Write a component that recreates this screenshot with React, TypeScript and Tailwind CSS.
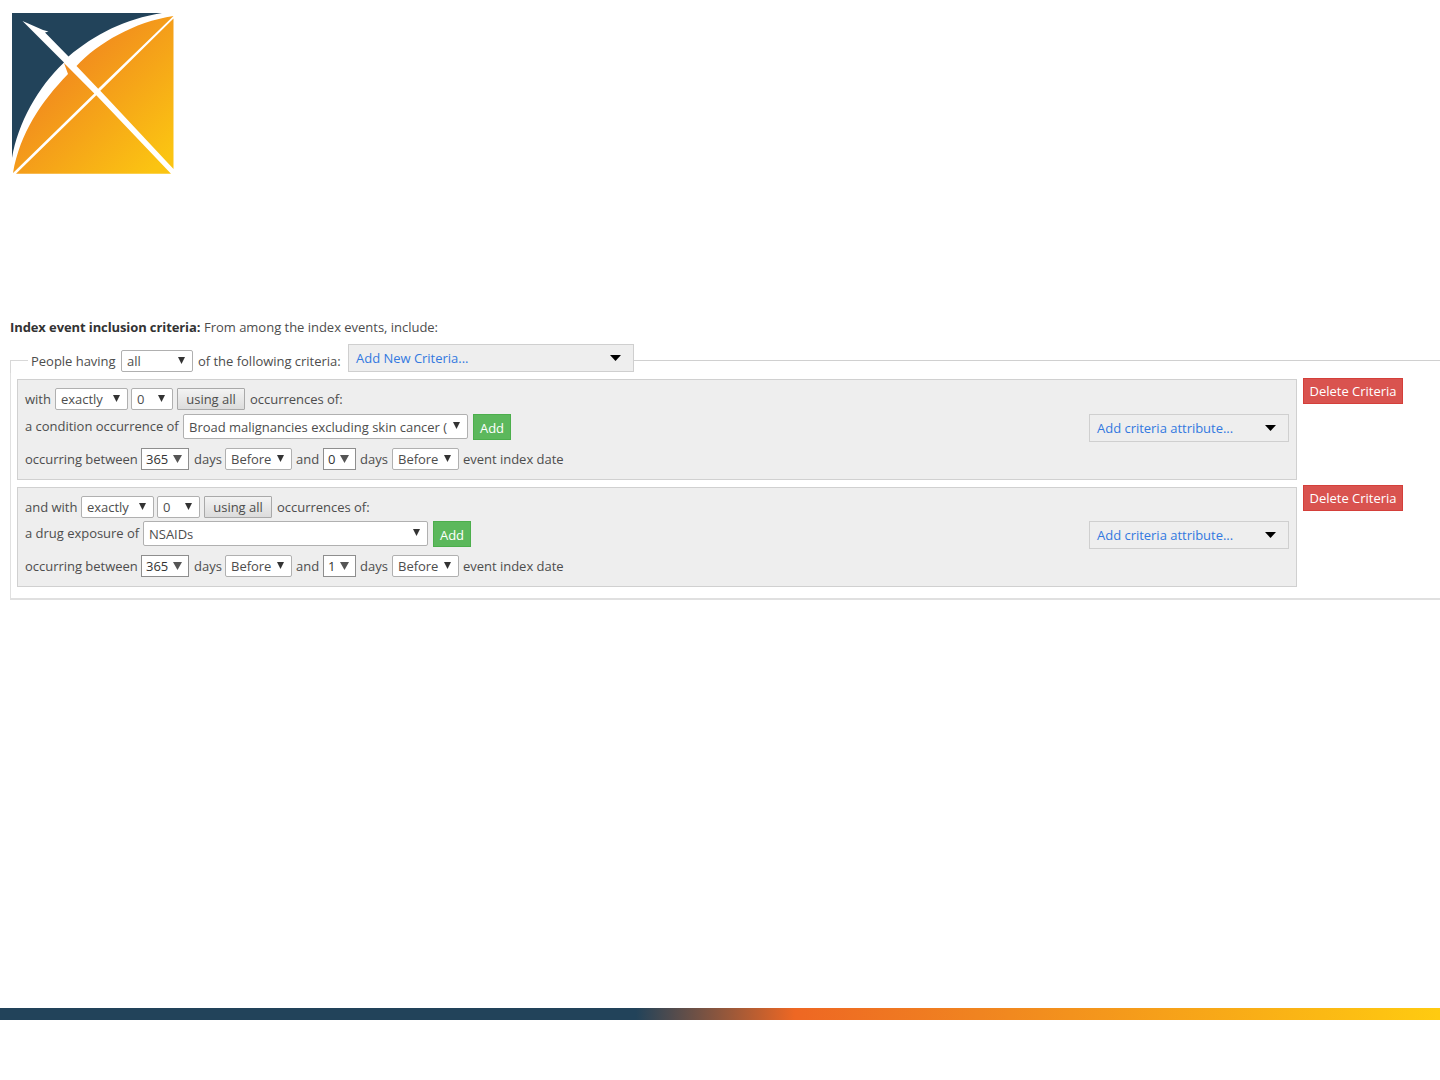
import React from "react";

function Logo() {
  return (
    <svg className="block h-[190px] w-[190px]" viewBox="0 0 190 190">
      <defs>
        <linearGradient id="bow" gradientUnits="userSpaceOnUse" x1="62" y1="62" x2="162" y2="162">
          <stop offset="0" stopColor="#f18a1e" />
          <stop offset="1" stopColor="#fbc412" />
        </linearGradient>
      </defs>
      <path d="M12 13H162C125 19 95 34 68.500 56.500L45 32.500L48.500 31.500L43 30L22.500 21L64 62.500C38 87 18 123 12 158Z" fill="#22435a" />
      <path d="M173.500 16C134 22 98 43 76.500 66L98.200 88.800ZM173.500 18.500L100.300 90.800L173.500 169ZM64 63L94.300 93.400L13 173C20 133 41 102 68 74ZM96.300 95.300L16 173.800H171Z" fill="url(#bow)" />
    </svg>
  );
}

function Text({ w, children }: { w: string; children: React.ReactNode }) {
  return <span className={`${w} shrink-0 whitespace-nowrap`}>{children}</span>;
}

function Arrow({ wide = false }: { wide?: boolean }) {
  return wide ? (
    <svg className="h-[6px] w-[11px] shrink-0" viewBox="0 0 11 6"><path d="M0 0H11L5.500 6Z" fill="#000" /></svg>
  ) : (
    <svg className="h-[7px] w-[7px] shrink-0" viewBox="0 0 7 7"><path d="M0 0H7L3.500 7Z" fill="#333" /></svg>
  );
}

function Select({ w, children, tall = false }: { w: string; children: React.ReactNode; tall?: boolean }) {
  return (
    <div className={`${w} ${tall ? "mb-px h-[25px]" : "h-[22px]"} flex shrink-0 items-center justify-between rounded-[2px] border border-[#b0b0b0] bg-white pr-[7px] pl-[5px] whitespace-nowrap`}>
      <span>{children}</span>
      <span className="pb-[2px]"><Arrow /></span>
    </div>
  );
}

function NumberBox({ w, children }: { w: string; children: React.ReactNode }) {
  return (
    <div className={`${w} flex h-[22px] shrink-0 items-center justify-between border border-[#8e8e8e] bg-white pr-[6px] pl-1 whitespace-nowrap text-[#333]`}>
      <span>{children}</span>
      <svg className="h-[8px] w-[9px]" viewBox="0 0 9 8"><path d="M0 0H9L4.500 8Z" fill="#555" /></svg>
    </div>
  );
}

function UsingAll({ w }: { w: string }) {
  return (
    <div className={`${w} flex h-[22px] shrink-0 items-center justify-center rounded-[1px] border border-[#a9a9a9] bg-linear-to-b from-[#f3f3f3] to-[#dcdcdc] whitespace-nowrap`}>
      using all
    </div>
  );
}

function AddButton() {
  return <div className="ml-[5px] flex h-[26px] w-[38px] shrink-0 items-center justify-center border border-[#4cae4c] bg-[#5cb85c] pt-px font-medium text-white">Add</div>;
}

function DropMenu({ w, children }: { w: string; children: React.ReactNode }) {
  return (
    <div className={`${w} flex h-[28px] shrink-0 items-center justify-between border border-[#cfcfcf] bg-[#eee] pr-3 pl-[7px] whitespace-nowrap text-[#3379e0]`}>
      <span>{children}</span>
      <Arrow wide />
    </div>
  );
}

function Criteria({ first, second, third, compact = false }: { first: React.ReactNode; second: React.ReactNode; third: string; compact?: boolean }) {
  return (
    <div className={`flex ${compact ? "h-[100px]" : "h-[108px]"} items-start`}>
      <div className={`flex ${compact ? "h-[100px]" : "h-[101px]"} w-[1280px] shrink-0 items-start justify-between border border-[#d0d0d0] bg-[#eee] pr-[7px] pl-[7px]`}>
        <div className="flex flex-col pt-2">
          <div className="flex h-[22px] items-center">{first}</div>
          <div className={`${compact ? "mt-[3px]" : "mt-1"} flex h-[26px] items-center`}>{second}</div>
          <div className="mt-2 flex h-[22px] items-center">
            <Text w="w-[116px]">occurring between</Text>
            <NumberBox w="w-[48px]">365</NumberBox>
            <Text w="ml-[5px] w-[31px]">days</Text>
            <Select w="w-[67px]">Before</Select>
            <Text w="ml-1 w-[27px]">and</Text>
            <NumberBox w="w-[33px]">{third}</NumberBox>
            <Text w="ml-1 w-[32px]">days</Text>
            <Select w="w-[67px]">Before</Select>
            <Text w="ml-1 w-[110px]">event index date</Text>
          </div>
        </div>
        <div className={compact ? "pt-[33px]" : "pt-[34px]"}><DropMenu w="w-[200px]">Add criteria attribute...</DropMenu></div>
      </div>
      <div className={`${compact ? "mt-[-2px]" : "mt-[-1px]"} ml-[6px] flex h-[26px] w-[100px] shrink-0 items-center justify-center border border-[#d43f3a] bg-[#d9534f] whitespace-nowrap text-white`}>
        Delete Criteria
      </div>
    </div>
  );
}

export default function App() {
  return (
    <div className="flex h-[1080px] w-[1440px] flex-col overflow-hidden bg-white font-['Open_Sans',sans-serif] text-[13px] leading-[20px] tracking-[-0.02px] text-[#4d4d4d]">
      <Logo />
      <div className="mt-[127px] flex h-5 pl-[10px] whitespace-nowrap">
        <b className="w-[194px] shrink-0 tracking-[-0.1px] text-[#333]">Index event inclusion criteria:</b>
        <span>From among the index events, include:</span>
      </div>
      <div className="mt-[7px] ml-[10px] flex h-[29px] items-start">
        <div className="mt-4 h-[13px] w-[18px] shrink-0 border-t border-l border-[#d8d8d8]" />
        <div className="mt-[6px] ml-[3px] flex h-[22px] items-center">
          <Text w="w-[90px]">People having</Text>
          <Select w="w-[72px]">all</Select>
          <Text w="ml-[5px] w-[150px]">of the following criteria:</Text>
        </div>
        <DropMenu w="w-[286px]">Add New Criteria...</DropMenu>
        <div className="mt-4 grow border-t border-[#d0d0d0]" />
      </div>
      <div className="ml-[10px] h-[227px] border-b-2 border-l border-[#e0e0e0] pt-[6px] pl-[6px]">
        <Criteria
          first={<>
            <Text w="w-[30px]">with</Text>
            <Select w="w-[73px]">exactly</Select>
            <Select w="ml-[3px] w-[42px]">0</Select>
            <UsingAll w="ml-1 w-[68px]" />
            <Text w="ml-[5px] w-[100px]">occurrences of:</Text>
          </>}
          second={<>
            <Text w="w-[158px] pb-[2px]">a condition occurrence of</Text>
            <Select tall w="w-[285px]">Broad malignancies excluding skin cancer (</Select>
            <AddButton />
          </>}
          third="0"
        />
        <Criteria
          compact
          first={<>
            <Text w="w-[56px]">and with</Text>
            <Select w="w-[73px]">exactly</Select>
            <Select w="ml-[3px] w-[43px]">0</Select>
            <UsingAll w="ml-1 w-[68px]" />
            <Text w="ml-[5px] w-[100px]">occurrences of:</Text>
          </>}
          second={<>
            <Text w="w-[118px] pb-[2px]">a drug exposure of</Text>
            <Select tall w="w-[285px]">NSAIDs</Select>
            <AddButton />
          </>}
          third="1"
        />
      </div>
      <div className="mt-auto mb-[60px] h-3 shrink-0 bg-[linear-gradient(90deg,#22435a_0,#22435a_636px,#ee6723_795px,#f08420_980px,#ffcb10_1440px)]" />
    </div>
  );
}
